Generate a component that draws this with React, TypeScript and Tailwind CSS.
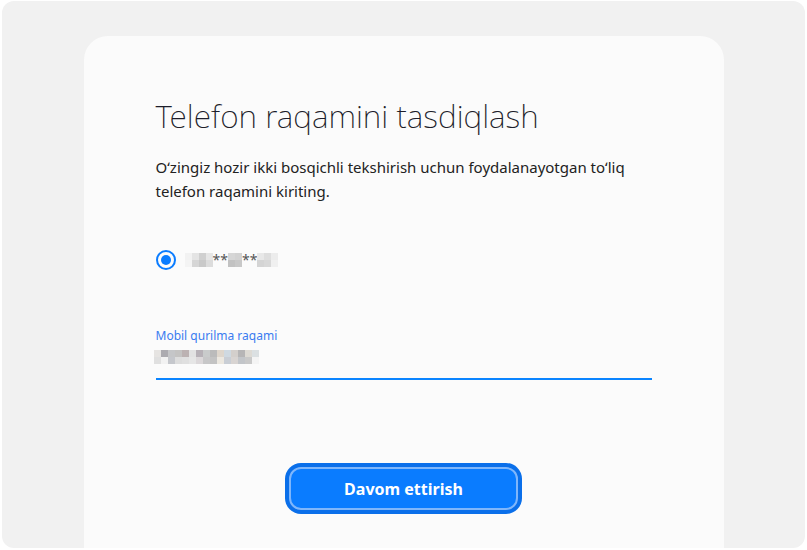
import React from "react";

const font = { fontFamily: '"Noto Sans", "Open Sans", sans-serif' };

// pixelated mask blocks for hidden digits
const Blur = ({ cells }: { cells: string[][] }) => (
  <span className="inline-flex flex-col">
    {cells.map((row, i) => (
      <span key={i} className="flex">
        {row.map((c, j) => (
          <span key={j} className="block w-[7px] h-[7px]" style={{ background: c }} />
        ))}
      </span>
    ))}
  </span>
);

const App = () => {
  return (
    <div className="w-[807px] h-[550px] bg-white pt-[1px] px-[2px]" style={font}>
      <div className="h-[547px] rounded-[12px] bg-[#f1f1f1] overflow-hidden pt-[35px]">
        <div className="mx-auto w-[640px] h-[540px] rounded-[24px] bg-[#fbfbfb] px-[72px] pt-[58px]">
          <h1 className="text-[31.7px] leading-[44px] font-extralight text-[#1d1d2a]">
            Telefon raqamini tasdiqlash
          </h1>
          <p className="mt-[17px] text-[15px] leading-[24px] text-[#222]">
            Oʻzingiz hozir ikki bosqichli tekshirish uchun foydalanayotgan toʻliq
            telefon raqamini kiriting.
          </p>

          <div className="mt-[47px] flex items-center gap-[9px]">
            <span className="w-[20px] h-[20px] rounded-full border-[2.5px] border-[#0a7cff] flex items-center justify-center">
              <span className="w-[10px] h-[10px] rounded-full bg-[#0a7cff]" />
            </span>
            <span className="flex items-center text-[14px] text-[#555]">
              <Blur
                cells={[
                  ["#f2f2f2", "#e4e4e4", "#d0d0d0", "#e6e6e6"],
                  ["#f4f4f4", "#d6d6d6", "#c9c9c9", "#dcdcdc"],
                ]}
              />
              <span className="leading-none">**</span>
              <Blur
                cells={[
                  ["#d6d6d6", "#d2d2d2"],
                  ["#c2c2c2", "#c8c8c8"],
                ]}
              />
              <span className="leading-none">**</span>
              <Blur
                cells={[
                  ["#e8e8e8", "#dedede", "#ececec"],
                  ["#d4d4d4", "#d8d8d8", "#f0f0f0"],
                ]}
              />
            </span>
          </div>

          <div className="mt-[58px] border-b-2 border-[#0a84ff] pb-[14px]">
            <div className="text-[12px] leading-[16px] text-[#3a7cf0]">Mobil qurilma raqami</div>
            <div className="mt-[6px] -ml-[2px] flex">
              <Blur
                cells={[
                  ["#e6e4e2", "#acabb0", "#c5c6c8", "#c4c3c2", "#bcb2b2", "#e2e2e2", "#b7b1b7", "#c9cbcb", "#bbbbbb", "#ded6cc", "#cfd9e1", "#d3cfcc", "#b6b5b6", "#dddad4", "#dbe0e2"],
                  ["#e0e0e0", "#f2f2f2", "#c5c7cc", "#dddddd", "#e0e0e0", "#e6e6e6", "#dcd8da", "#c7c7c8", "#c3c3c3", "#ece8e0", "#c9ced5", "#d8d4d2", "#c2c5c9", "#c9c9c9", "#f4f4f4"],
                ]}
              />
            </div>
          </div>

          <div className="mt-[83px] flex justify-center">
            <button className="w-[237px] h-[51px] rounded-[16px] bg-[#0a6fea] p-[4px]">
              <span className="flex h-full w-full items-center justify-center rounded-[12px] bg-[#0a7cff] border-2 border-[#7fb6fb] text-white text-[16px] font-bold">
                Davom ettirish
              </span>
            </button>
          </div>
        </div>
      </div>
    </div>
  );
};

export default App;
